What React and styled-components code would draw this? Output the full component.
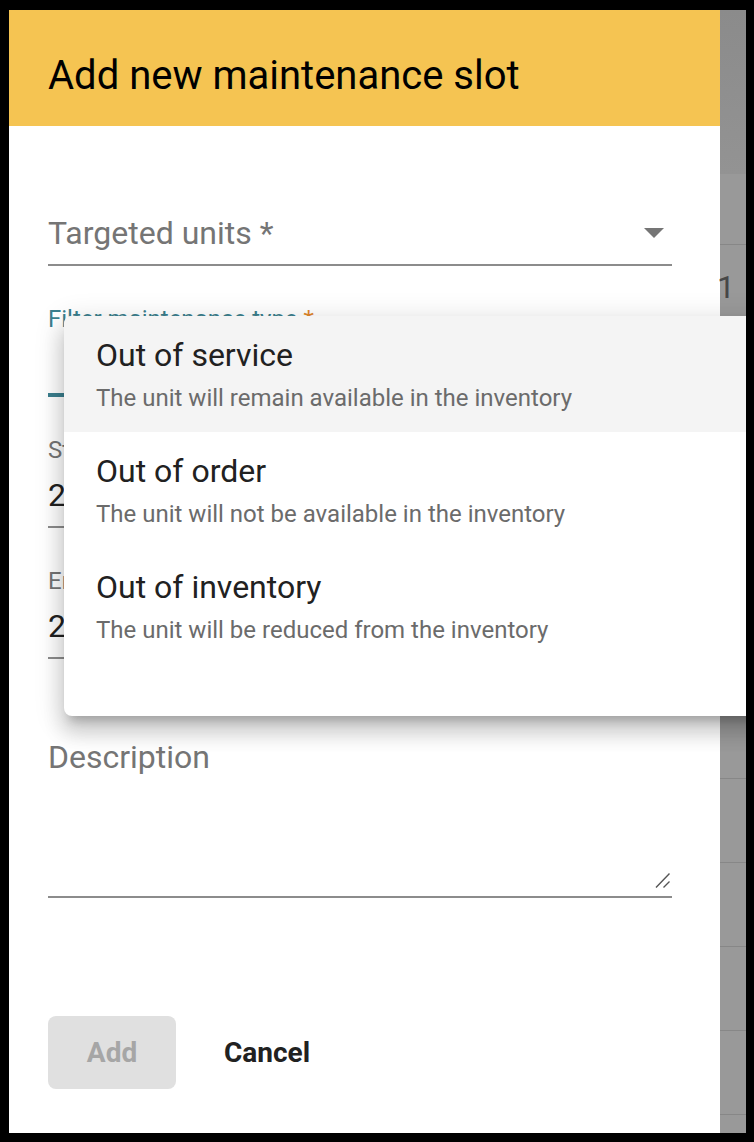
import React from 'react';
import styled, { createGlobalStyle } from 'styled-components';

const GlobalStyle = createGlobalStyle`
  html, body {
    margin: 0;
    padding: 0;
    background: #000;
  }
  body {
    font-family: Roboto, "Noto Sans", "Liberation Sans", sans-serif;
  }
  * {
    box-sizing: border-box;
  }
`;

const Frame = styled.div`
  width: 754px;
  height: 1142px;
  padding: 10px 8px 9px 9px;
  background: #000;
`;

const Screen = styled.div`
  position: relative;
  display: flex;
  width: 737px;
  height: 1123px;
  overflow: hidden;
  background: #999;
`;

const Dialog = styled.div`
  width: 711px;
  flex-shrink: 0;
  display: flex;
  flex-direction: column;
  background: #fff;
`;

const Header = styled.div`
  height: 116px;
  padding: 42px 39px 0;
  background: #f5c452;
`;

const Title = styled.h2`
  margin: 0;
  font-size: 40px;
  line-height: 48px;
  font-weight: 400;
  color: #000;
`;

const Body = styled.div`
  display: flex;
  flex-direction: column;
  gap: 39px;
  padding: 48px 48px 0 39px;
`;

const Field = styled.div`
  display: flex;
  flex-direction: column;
  padding-top: ${(p) => (p.shrunk ? 0 : 39)}px;
  padding-bottom: ${(p) => (p.focused ? 9 : p.multiline ? 7 : 11)}px;
  border-bottom: ${(p) => (p.focused ? '4px solid #3b7f8e' : '2px solid #8c8c8c')};
`;

const Label = styled.label`
  height: 28px;
  margin-bottom: 11px;
  font-size: 24px;
  line-height: 28px;
  color: ${(p) => (p.focused ? '#3b7f8e' : '#757575')};
  white-space: nowrap;
`;

const Star = styled.span`
  color: #e0862b;
`;

const InputRow = styled.div`
  display: flex;
  align-items: center;
  justify-content: space-between;
  height: 40px;
  font-size: 32px;
  line-height: 40px;
  color: ${(p) => (p.placeholder ? '#757575' : '#212121')};
  white-space: nowrap;
`;

const Arrow = styled.svg`
  margin-right: 8px;
  flex-shrink: 0;
`;

const TextAreaBox = styled.div`
  display: flex;
  flex-direction: column;
  justify-content: space-between;
  height: 152px;
`;

const Grip = styled.svg`
  align-self: flex-end;
  margin-right: 1px;
`;

const Actions = styled.div`
  display: flex;
  align-items: center;
  gap: 24px;
  margin-top: 118px;
  padding-left: 39px;
`;

const Button = styled.button`
  height: 73px;
  padding: 0 ${(p) => (p.primary ? 0 : 24)}px;
  width: ${(p) => (p.primary ? '128px' : 'auto')};
  border: none;
  border-radius: 8px;
  background: ${(p) => (p.primary ? '#e0e0e0' : 'transparent')};
  color: ${(p) => (p.primary ? '#a6a6a6' : '#212121')};
  font-family: Roboto, "Liberation Sans", sans-serif;
  font-size: 28px;
  font-weight: 700;
  cursor: pointer;
`;

const Backdrop = styled.div`
  flex: 1;
  display: flex;
  flex-direction: column;
  background: #999;
`;

const BackdropTop = styled.div`
  height: 164px;
  flex-shrink: 0;
  background: linear-gradient(#8b8b8b, #939393);
`;

const BackdropRow = styled.div`
  height: ${(p) => p.h}px;
  padding-top: 22px;
  border-bottom: 1px solid #878787;
  font-size: 32px;
  line-height: 40px;
  color: #474747;
  text-indent: -3px;
  flex-shrink: 0;
`;

const Menu = styled.ul`
  position: absolute;
  top: 306px;
  left: 55px;
  width: 720px;
  margin: 0;
  padding: 0 0 52px;
  list-style: none;
  background: #fff;
  border-radius: 8px;
  overflow: hidden;
  box-shadow: 0 10px 10px -6px rgba(0, 0, 0, 0.2), 0 16px 20px 2px rgba(0, 0, 0, 0.14),
    0 6px 28px 4px rgba(0, 0, 0, 0.12);
`;

const MenuItem = styled.li`
  height: 116px;
  padding: 19px 32px 0;
  background: ${(p) => (p.active ? '#f4f4f4' : '#fff')};
  cursor: pointer;
`;

const ItemTitle = styled.div`
  font-size: 32px;
  line-height: 40px;
  color: #212121;
`;

const ItemText = styled.div`
  margin-top: 7px;
  font-size: 24px;
  line-height: 32px;
  color: #6b6b6b;
`;

const options = [
  { id: 'service', title: 'Out of service', text: 'The unit will remain available in the inventory' },
  { id: 'order', title: 'Out of order', text: 'The unit will not be available in the inventory' },
  { id: 'inventory', title: 'Out of inventory', text: 'The unit will be reduced from the inventory' },
];

const backdropRows = [71, 114, 84, 84, 84, 84, 84, 84, 84, 84, 84];

export default function App() {
  return (
    <>
      <GlobalStyle />
      <Frame>
        <Screen>
          <Dialog>
            <Header>
              <Title>Add new maintenance slot</Title>
            </Header>
            <Body>
              <Field>
                <InputRow placeholder="true">
                  <span>Targeted units *</span>
                  <Arrow width="20" height="10" viewBox="0 0 20 10">
                    <path d="M0 0h20L10 10z" fill="#757575" />
                  </Arrow>
                </InputRow>
              </Field>
              <Field shrunk focused>
                <Label focused>
                  Filter maintenance type <Star>*</Star>
                </Label>
                <InputRow />
              </Field>
              <Field shrunk>
                <Label>Start date *</Label>
                <InputRow>2023-06-12</InputRow>
              </Field>
              <Field shrunk>
                <Label>End date *</Label>
                <InputRow>2023-06-14</InputRow>
              </Field>
              <Field multiline>
                <TextAreaBox>
                  <InputRow placeholder="true">Description</InputRow>
                  <Grip width="16" height="17" viewBox="0 0 16 17">
                    <path d="M14.5 1.5L1 15.5M14.5 9.5L8.5 15.5" stroke="#555" strokeWidth="1.4" />
                  </Grip>
                </TextAreaBox>
              </Field>
            </Body>
            <Actions>
              <Button primary disabled>
                Add
              </Button>
              <Button>Cancel</Button>
            </Actions>
          </Dialog>
          <Backdrop>
            <BackdropTop />
            {backdropRows.map((h, i) => (
              <BackdropRow key={i} h={h}>
                {i === 1 ? '1' : ''}
              </BackdropRow>
            ))}
          </Backdrop>
          <Menu>
            {options.map((o, i) => (
              <MenuItem key={o.id} active={i === 0}>
                <ItemTitle>{o.title}</ItemTitle>
                <ItemText>{o.text}</ItemText>
              </MenuItem>
            ))}
          </Menu>
        </Screen>
      </Frame>
    </>
  );
}
